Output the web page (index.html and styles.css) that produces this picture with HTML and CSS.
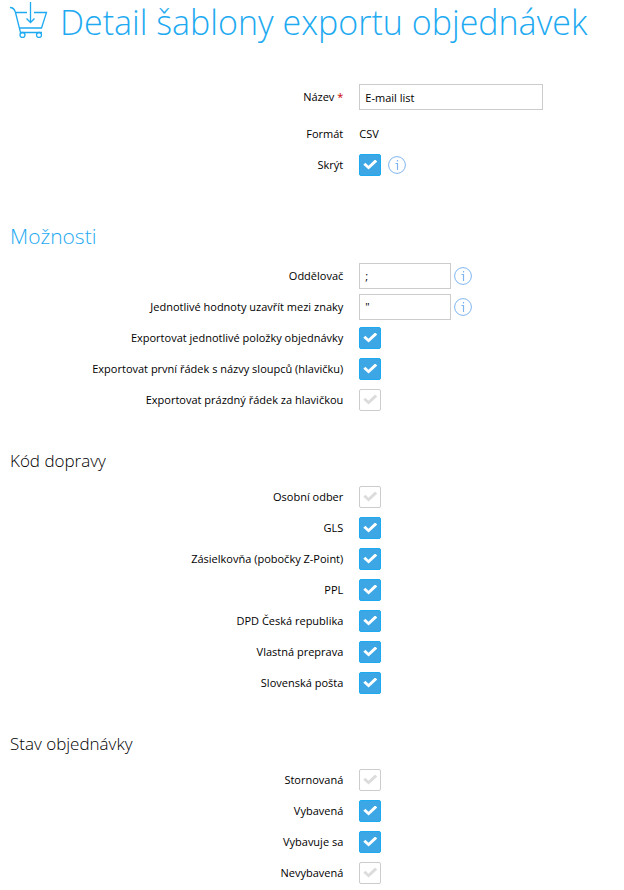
FILE: index.html
```html
<!DOCTYPE html>
<html lang="cs">
<head>
  <meta charset="utf-8">
  <meta name="viewport" content="width=device-width, initial-scale=1">
  <title>Detail šablony exportu objednávek</title>
  <link rel="stylesheet" href="styles.css">
</head>
<body>

  <!-- Info icon shared by the rows -->
  <svg class="sprite" width="0" height="0" aria-hidden="true">
    <symbol id="info" viewBox="0 0 18 18">
      <circle cx="9" cy="9" r="8.400" fill="none" stroke="currentColor"/>
      <path d="M7.500 7.500H9.500V14M9.500 4V5.500" fill="none" stroke="currentColor" stroke-width="1.200"/>
    </symbol>
  </svg>

  <header class="page-header">
    <svg class="cart-icon" viewBox="0 0 38 38" width="38" height="38" fill="none" stroke="currentColor" stroke-width="1.3" aria-hidden="true">
      <path d="M0 7.500C3 7.500 4.500 9 5.500 12.500L10.500 32.500H32M5.500 12.500H17M24 12.500H36.500L31.500 28H9.500"/>
      <path d="M20.500 2V22.500M16.500 18.500L20.500 22.500L24.500 18.500"/>
      <circle cx="12.500" cy="35" r="2.500"/>
      <circle cx="29" cy="35" r="2.500"/>
    </svg>
    <h1>Detail šablony exportu objednávek</h1>
  </header>

  <form class="template-form">
    <section class="basic">
      <div class="row row-tall">
        <label for="name">Název <span class="required">*</span></label>
        <div class="control"><input type="text" id="name" class="text-input" value="E-mail list"></div>
      </div>
      <div class="row">
        <span class="label">Formát</span>
        <div class="control">CSV</div>
      </div>
      <div class="row">
        <label for="hide">Skrýt</label>
        <div class="control">
          <input type="checkbox" id="hide" checked>
          <svg class="info-icon info-wide"><use href="#info"/></svg>
        </div>
      </div>
    </section>

    <section class="options">
      <h2>Možnosti</h2>
      <div class="row">
        <label for="separator">Oddělovač</label>
        <div class="control">
          <input type="text" id="separator" class="text-input short" value=";">
          <svg class="info-icon"><use href="#info"/></svg>
        </div>
      </div>
      <div class="row">
        <label for="enclosure">Jednotlivé hodnoty uzavřít mezi znaky</label>
        <div class="control">
          <input type="text" id="enclosure" class="text-input short" value="&quot;">
          <svg class="info-icon"><use href="#info"/></svg>
        </div>
      </div>
      <div class="row">
        <label for="items">Exportovat jednotlivé položky objednávky</label>
        <div class="control"><input type="checkbox" id="items" checked></div>
      </div>
      <div class="row">
        <label for="header-row">Exportovat první řádek s názvy sloupců (hlavičku)</label>
        <div class="control"><input type="checkbox" id="header-row" checked></div>
      </div>
      <div class="row">
        <label for="empty-row">Exportovat prázdný řádek za hlavičkou</label>
        <div class="control"><input type="checkbox" id="empty-row"></div>
      </div>
    </section>

    <section class="group">
      <h3>Kód dopravy</h3>
      <div class="row">
        <label for="pickup">Osobní odber</label>
        <div class="control"><input type="checkbox" id="pickup"></div>
      </div>
      <div class="row">
        <label for="gls">GLS</label>
        <div class="control"><input type="checkbox" id="gls" checked></div>
      </div>
      <div class="row">
        <label for="zpoint">Zásielkovňa (pobočky Z-Point)</label>
        <div class="control"><input type="checkbox" id="zpoint" checked></div>
      </div>
      <div class="row">
        <label for="ppl">PPL</label>
        <div class="control"><input type="checkbox" id="ppl" checked></div>
      </div>
      <div class="row">
        <label for="dpd">DPD Česká republika</label>
        <div class="control"><input type="checkbox" id="dpd" checked></div>
      </div>
      <div class="row">
        <label for="own">Vlastná preprava</label>
        <div class="control"><input type="checkbox" id="own" checked></div>
      </div>
      <div class="row">
        <label for="post">Slovenská pošta</label>
        <div class="control"><input type="checkbox" id="post" checked></div>
      </div>
    </section>

    <section class="group">
      <h3>Stav objednávky</h3>
      <div class="row">
        <label for="cancelled">Stornovaná</label>
        <div class="control"><input type="checkbox" id="cancelled"></div>
      </div>
      <div class="row">
        <label for="done">Vybavená</label>
        <div class="control"><input type="checkbox" id="done" checked></div>
      </div>
      <div class="row">
        <label for="processing">Vybavuje sa</label>
        <div class="control"><input type="checkbox" id="processing" checked></div>
      </div>
      <div class="row">
        <label for="pending">Nevybavená</label>
        <div class="control"><input type="checkbox" id="pending"></div>
      </div>
    </section>
  </form>

</body>
</html>
```

FILE: styles.css
```css
* {
  box-sizing: border-box;
}

body {
  margin: 0;
  padding: 0 8px 0 10px;
  font-family: "Open Sans", "Noto Sans", sans-serif;
  font-size: 11px;
  line-height: 16px;
  color: #000;
  background-color: #fff;
}

h1,
h2,
h3 {
  margin: 0;
  font-weight: 300;
}

.sprite {
  display: none;
}

/* Page title */
.page-header {
  display: flex;
  align-items: flex-start;
  gap: 12px;
  color: #1eaaf1;
}

.cart-icon {
  flex: none;
}

h1 {
  font-size: 34px;
  line-height: 44px;
}

/* Form rows */
.basic {
  padding-top: 32px;
}

.row {
  display: grid;
  grid-template-columns: 55% 1fr;
  column-gap: 16px;
  align-items: center;
  min-height: 31px;
}

.row-tall {
  min-height: 42px;
}

.row label,
.row .label {
  text-align: right;
}

.required {
  color: #c00;
}

.control {
  display: flex;
  align-items: center;
  gap: 3px;
}

.text-input {
  width: 184px;
  height: 26px;
  padding: 0 5px;
  border: 1px solid #ccc;
  font-family: inherit;
  font-size: 11px;
  color: #000;
  background-color: #fff;
}

.text-input.short {
  width: 92px;
}

/* Checkboxes */
input[type="checkbox"] {
  appearance: none;
  display: grid;
  place-items: center;
  width: 22px;
  height: 22px;
  margin: 0;
  border: 1px solid #ccc;
  border-radius: 2px;
  background-color: #fff;
}

input[type="checkbox"]::before {
  content: "";
  width: 14px;
  height: 10px;
  background-color: #dcdcdc;
  clip-path: polygon(0 52%, 15% 32%, 37% 62%, 84% 0, 100% 19%, 38% 100%);
}

input[type="checkbox"]:checked {
  border-color: #1eaaf1;
  background-color: #3da6e5;
}

input[type="checkbox"]:checked::before {
  background-color: #fff;
}

.info-icon {
  width: 18px;
  height: 18px;
  color: #7fb5ee;
}

.info-wide {
  margin-left: 4px;
}

/* Sections */
h2 {
  padding: 44px 0 12px;
  font-size: 21px;
  line-height: 24px;
  color: #1eaaf1;
}

h3 {
  padding: 34px 0 8px;
  font-size: 17px;
  line-height: 24px;
}
```
